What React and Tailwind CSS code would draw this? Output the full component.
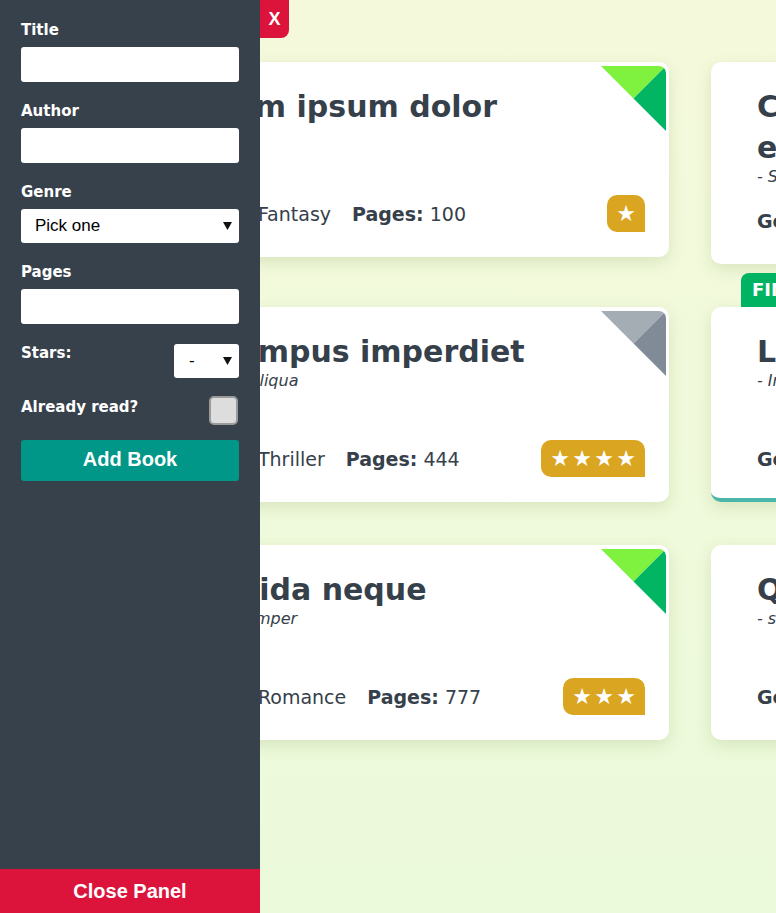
import React from 'react';

const books = [
  [
    { title: 'Lorem ipsum dolor', author: '- Sit amet', genre: 'Fantasy', pages: 100, stars: 1, read: true },
    { title: 'Consectetur adipiscing elit', author: '- Sed do eiusmod', genre: 'Sci-Fi', pages: 312, stars: 2, read: false },
  ],
  [
    { title: 'In tempus imperdiet', author: '- Magna aliqua', genre: 'Thriller', pages: 444, stars: 4, read: false },
    { title: 'Lacinia quis vel', author: '- Integer eget', genre: 'Horror', pages: 210, stars: 5, read: true, finished: true },
  ],
  [
    { title: 'Gravida neque', author: '- Nulla semper', genre: 'Romance', pages: 777, stars: 3, read: true },
    { title: 'Quisque egestas', author: '- sagittis orci', genre: 'Drama', pages: 158, stars: 2, read: false },
  ],
];

const CornerMark = ({ read }) => (
  <svg
    width="65"
    height="65"
    viewBox="0 0 65 65"
    className="absolute top-1 right-[3px] rounded-tr-[7px]"
  >
    <polygon points="0,0 65,0 32.5,32.5" fill={read ? '#7ef23f' : '#a4acb4'} />
    <polygon points="65,0 65,65 32.5,32.5" fill={read ? '#02b563' : '#818b97'} />
  </svg>
);

const StarBadge = ({ count }) => (
  <div className="flex h-[37px] items-center rounded-[10px] rounded-br-none bg-[#daa520] px-2 text-white">
    {Array.from({ length: count }).map((_, i) => (
      <span key={i} className="inline-block w-[22px] text-center text-[22px] leading-none">
        ★
      </span>
    ))}
  </div>
);

const BookCard = ({ book }) => (
  <div
    className={`relative flex flex-col rounded-[10px] bg-white pl-[46px] pr-6 pt-6 shadow-[0_5px_16px_rgba(120,150,70,0.2)] ${
      book.finished ? 'border-b-4 border-[#4db6ac] pb-[21px]' : 'pb-[25px]'
    }`}
  >
    {book.finished && (
      <div className="absolute bottom-full left-[30px] rounded-t-[8px] bg-[#00b362] px-[11px] pt-[6px] pb-[6px] text-[18px] font-bold leading-[22px] text-white">
        FINISHED
      </div>
    )}
    <CornerMark read={book.read} />
    <div className="min-h-[93px]">
      <h2 className="max-w-[400px] text-[30px] font-bold leading-[41px]">{book.title}</h2>
      <p className="text-[16px] italic leading-[18px]">{book.author}</p>
    </div>
    <div className="mt-4 flex items-center justify-between">
      <p className="text-[19px] leading-6">
        <b>Genre:</b> {book.genre}
        <span className="ml-[21px]">
          <b>Pages:</b> {book.pages}
        </span>
      </p>
      <StarBadge count={book.stars} />
    </div>
  </div>
);

const Field = ({ label, children }) => (
  <div className="mb-[19px]">
    <label className="mb-[7px] block text-[15px] font-bold leading-5 text-white">{label}</label>
    {children}
  </div>
);

const Arrow = () => (
  <svg width="9" height="8" viewBox="0 0 9 8" className="pointer-events-none absolute right-[7px] top-1/2 -translate-y-1/2">
    <polygon points="0,0 9,0 4.5,8" fill="#111" />
  </svg>
);

export default function App() {
  return (
    <div
      className="relative h-[913px] w-full overflow-hidden bg-gradient-to-b from-[#f5f9dc] to-[#ebfadb] text-[#36404a]"
      style={{ fontFamily: '"DejaVu Sans", sans-serif' }}
    >
      <main className="pl-[134px] pt-[62px]">
        <div className="grid w-max grid-cols-[535px_535px] items-start gap-x-[42px] gap-y-[43px]">
          {books.flat().map((b) => (
            <BookCard key={b.title} book={b} />
          ))}
        </div>
      </main>

      <aside className="absolute inset-y-0 left-0 flex w-[260px] flex-col bg-[#37414b]">
        <button className="absolute left-full top-0 h-[38px] w-[29px] rounded-br-[8px] bg-[#dc143c] font-['Liberation_Sans',sans-serif] text-[18px] font-bold text-white">
          X
        </button>
        <form className="px-[21px] pt-5">
          <Field label="Title">
            <input className="block h-[35px] w-full rounded-[3px] bg-white" />
          </Field>
          <Field label="Author">
            <input className="block h-[35px] w-full rounded-[3px] bg-white" />
          </Field>
          <Field label="Genre">
            <div className="relative">
              <select className="block h-[34px] w-full appearance-none rounded-[3px] bg-white pl-[14px] font-['Liberation_Sans',sans-serif] text-[17px] text-black">
                <option>Pick one</option>
              </select>
              <Arrow />
            </div>
          </Field>
          <Field label="Pages">
            <input className="block h-[35px] w-full rounded-[3px] bg-white" />
          </Field>
          <div className="flex items-start justify-between">
            <label className="text-[15px] font-bold leading-5 text-white">Stars:</label>
            <div className="relative mt-px">
              <select className="block h-[34px] w-[65px] appearance-none rounded-[3px] bg-white pl-[15px] font-['Liberation_Sans',sans-serif] text-[17px] text-black">
                <option>-</option>
              </select>
              <Arrow />
            </div>
          </div>
          <div className="mt-[18px] flex items-start justify-between">
            <label className="mt-px text-[15px] font-bold leading-5 text-white">Already read?</label>
            <input
              type="checkbox"
              className="mr-px h-[29px] w-[29px] appearance-none rounded-[5px] border-2 border-[#9a9a9a] bg-[#dddddd]"
            />
          </div>
          <button
            type="button"
            className="mt-[15px] h-[41px] w-full rounded-[3px] bg-[#009688] pb-[3px] font-['Liberation_Sans',sans-serif] text-[20px] font-bold text-white"
          >
            Add Book
          </button>
        </form>
        <button className="mt-auto h-[44px] w-full bg-[#dc143c] font-['Liberation_Sans',sans-serif] text-[20px] font-bold text-white">
          Close Panel
        </button>
      </aside>
    </div>
  );
}
